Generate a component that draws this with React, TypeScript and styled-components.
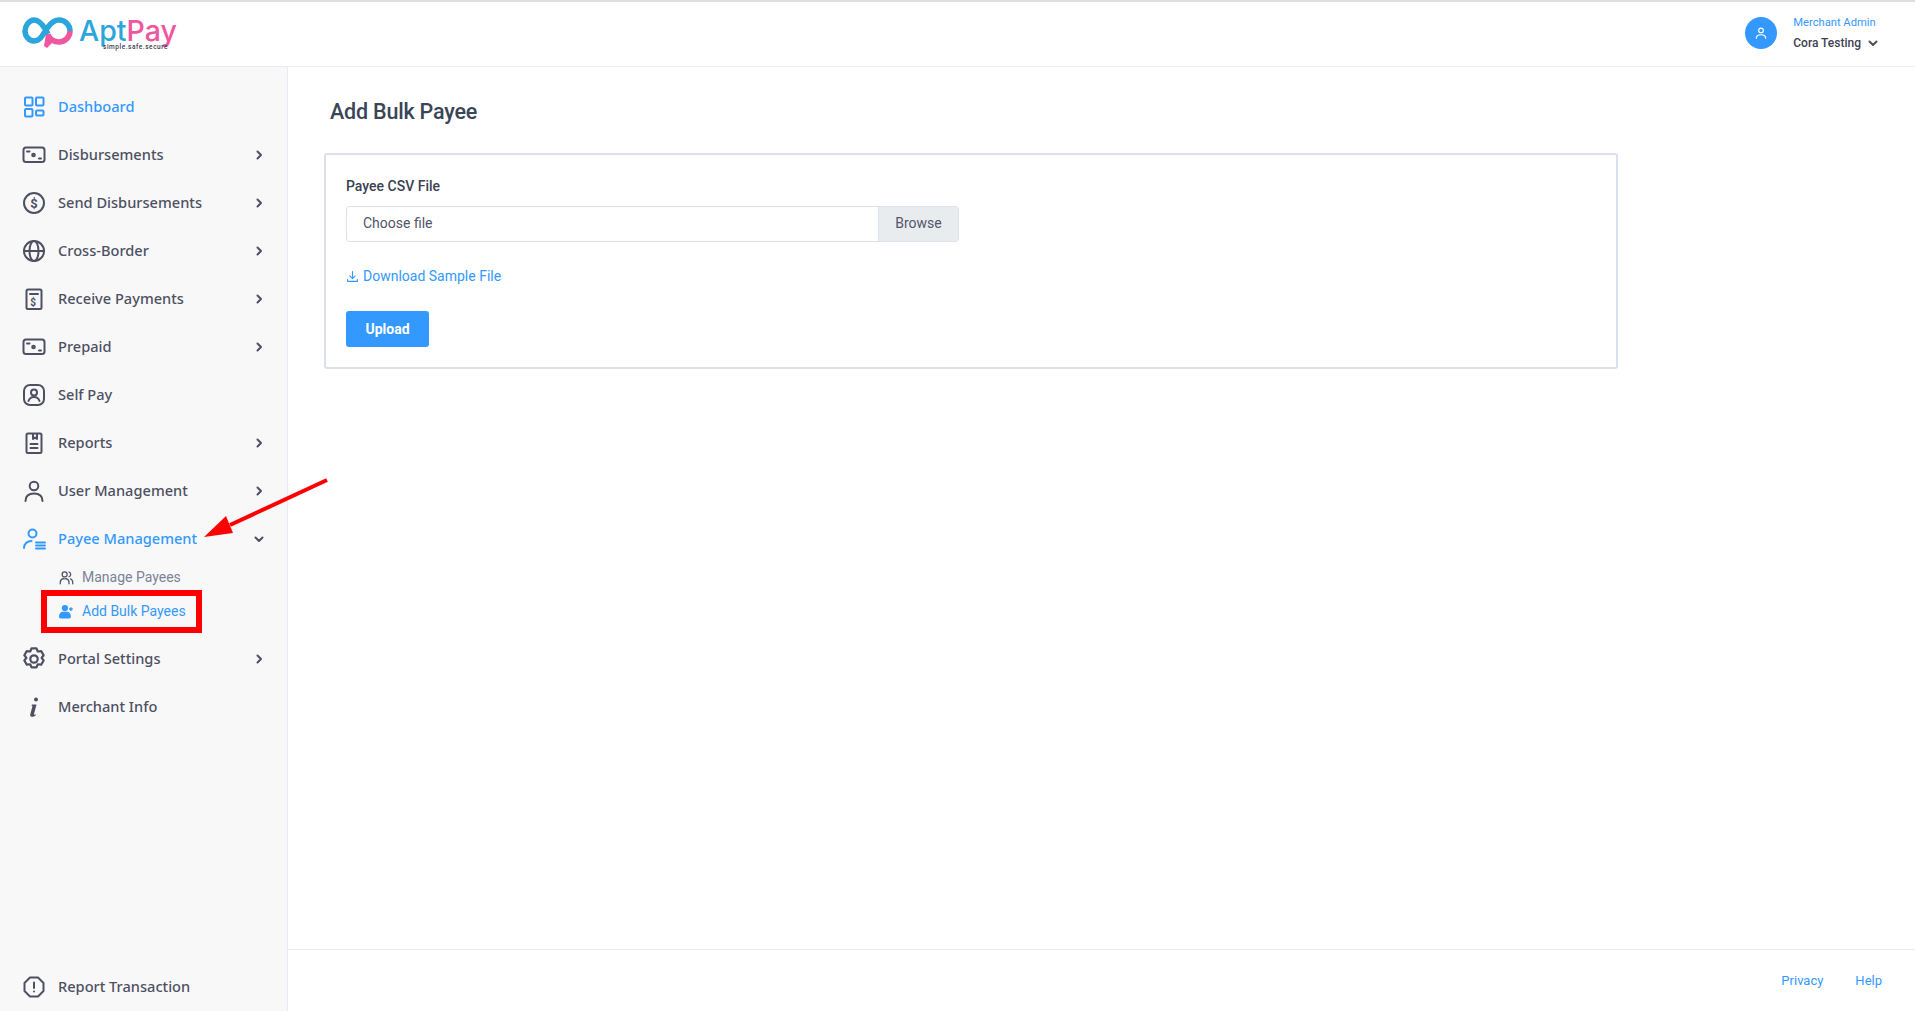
import React from "react";
import styled, { createGlobalStyle } from "styled-components";

const Global = createGlobalStyle`
  html, body { margin: 0; padding: 0; background: #fff; }
  body { font-family: Roboto, "Liberation Sans", sans-serif; color: #343a4e; }
  * { box-sizing: border-box; }
`;

const blue = "#3399ff";
const navInk = "#4e5062";
const navFont = `"Noto Sans", "Open Sans", sans-serif`;

const Page = styled.div`
  position: relative;
  width: 1915px;
  height: 1011px;
  display: grid;
  grid-template-rows: 65px 1fr;
  overflow: hidden;
  border-top: 2px solid #e0e0e0;
`;
const Header = styled.header`
  display: flex;
  align-items: center;
  justify-content: space-between;
  padding: 0 36px 3px 22px;
  border-bottom: 1px solid #e8edf4;
  height: 65px;
`;
const Logo = styled.div`
  display: flex;
  align-items: center;
  gap: 6px;
`;
const Wordmark = styled.div`
  position: relative;
  font-family: Inter, sans-serif;
  font-size: 28.5px;
  font-weight: 500;
  line-height: 28px;
  color: #2ba6dc;
  padding-bottom: 4px;
`;
const WordPink = styled.span`
  color: #f0559f;
`;
const Tagline = styled.span`
  position: absolute;
  left: 24px;
  bottom: -2px;
  font-family: Roboto, sans-serif;
  font-size: 6.5px;
  font-weight: 500;
  line-height: 7px;
  letter-spacing: 0.55px;
  color: #3b3f55;
  white-space: nowrap;
`;
const UserBox = styled.div`
  display: flex;
  align-items: center;
  gap: 16px;
`;
const Avatar = styled.div`
  width: 32px;
  height: 32px;
  border-radius: 50%;
  background: ${blue};
  display: flex;
  align-items: center;
  justify-content: center;
  color: #fff;
`;
const UserText = styled.div`
  display: flex;
  flex-direction: column;
  gap: 6px;
`;
const Role = styled.span`
  font-size: 11.2px;
  line-height: 14px;
  color: ${blue};
`;
const UserName = styled.span`
  display: flex;
  align-items: center;
  gap: 6px;
  font-size: 12px;
  line-height: 14px;
  font-weight: 500;
  color: #3f4254;
`;
const Body = styled.div`
  display: grid;
  grid-template-columns: 288px 1fr;
  min-height: 0;
`;
const Sidebar = styled.nav`
  display: flex;
  flex-direction: column;
  background: #f8f8f9;
  border-right: 1px solid #e9eaf3;
  padding-top: 16px;
`;
const NavRow = styled.div<{ $active?: boolean; $bottom?: boolean }>`
  height: 48px;
  flex: none;
  display: flex;
  align-items: center;
  padding: 0 22px 0 22px;
  gap: 12px;
  font-family: ${navFont};
  font-size: 14.6px;
  font-weight: 500;
  color: ${(p) => (p.$active ? blue : navInk)};
  margin-top: ${(p) => (p.$bottom ? "auto" : "0")};
`;
const NavIcon = styled.span`
  width: 24px;
  height: 24px;
  flex: none;
  display: flex;
  align-items: center;
  justify-content: center;
`;
const NavLabel = styled.span`
  flex: 1;
  padding-bottom: 2px;
`;
const SubMenu = styled.div`
  display: flex;
  flex-direction: column;
  margin-top: -3px;
  padding: 0 0 7px 59px;
`;
const SubRow = styled.div<{ $active?: boolean }>`
  height: 34px;
  display: flex;
  align-items: center;
  gap: 8px;
  font-size: 14px;
  color: ${(p) => (p.$active ? blue : "#7b8398")};
`;
const SubIcon = styled.span`
  width: 15px;
  height: 15px;
  display: flex;
  color: ${navInk};
`;
const SubIconActive = styled(SubIcon)`
  color: ${blue};
`;
const Main = styled.main`
  display: flex;
  flex-direction: column;
  min-width: 0;
`;
const Content = styled.div`
  flex: 1;
  padding: 27px 0 0 36px;
`;
const Title = styled.h1`
  margin: 0 0 23px 6px;
  font-size: 21.5px;
  line-height: 36px;
  font-weight: 500;
  letter-spacing: -0.2px;
  color: #3a4558;
`;
const Card = styled.section`
  width: 1294px;
  height: 216px;
  border: 2px solid #dcdfee;
  border-radius: 3px;
  padding: 21px 20px;
`;
const Label = styled.div`
  font-size: 14px;
  line-height: 20px;
  font-weight: 500;
  color: #3b4152;
  margin-bottom: 10px;
`;
const FileField = styled.div`
  width: 613px;
  height: 36px;
  display: flex;
  border: 1px solid #dfe2ea;
  border-radius: 3px;
  overflow: hidden;
  font-size: 14px;
  color: #50566a;
`;
const FileName = styled.div`
  flex: 1;
  padding-left: 16px;
  line-height: 33px;
`;
const Browse = styled.div`
  width: 80px;
  text-align: center;
  line-height: 33px;
  background: #e9ecef;
  border-left: 1px solid #dfe2ea;
`;
const DownloadLink = styled.a`
  display: flex;
  align-items: center;
  gap: 4px;
  margin-top: 24px;
  height: 20px;
  font-size: 14px;
  color: ${blue};
`;
const UploadButton = styled.button`
  display: block;
  margin-top: 25px;
  width: 83px;
  height: 36px;
  border: 0;
  border-radius: 3px;
  background: ${blue};
  color: #fff;
  font-family: Roboto, sans-serif;
  font-size: 14px;
  font-weight: 700;
`;
const Footer = styled.footer`
  height: 62px;
  flex: none;
  border-top: 1px solid #e9ebee;
  display: flex;
  justify-content: flex-end;
  gap: 32px;
  padding: 22px 33px 0 0;
`;
const FooterLink = styled.a`
  font-size: 13px;
  line-height: 18px;
  color: ${blue};
`;
const Annotation = styled.svg`
  position: absolute;
  left: 0;
  top: -2px;
  pointer-events: none;
`;

type SP = { children: React.ReactNode; s?: number; w?: number };
const Ico = ({ children, s = 24, w = 2 }: SP) => (
  <svg width={s} height={s} viewBox="0 0 24 24" fill="none" stroke="currentColor" strokeWidth={w} strokeLinecap="round" strokeLinejoin="round">
    {children}
  </svg>
);
const Chevron = ({ down }: { down?: boolean }) => (
  <svg width="12" height="12" viewBox="0 0 12 12" fill="none" stroke={navInk} strokeWidth="2" strokeLinecap="round" strokeLinejoin="round" style={{ flex: "none" }}>
    <path d={down ? "M2.500 4.500 6 8l3.500-3.500" : "M4.500 2.500 8 6l-3.500 3.500"} />
  </svg>
);

const Dash = () => (
  <Ico>
    <rect x="3" y="2.500" width="7.500" height="8" rx="1" />
    <rect x="14" y="2.500" width="7.500" height="8" rx="1" />
    <rect x="3" y="14" width="7.500" height="7.500" rx="1" />
    <rect x="14" y="15.500" width="7.500" height="5" rx="1" />
  </Ico>
);
const CashCard = () => (
  <Ico>
    <rect x="1.500" y="4.500" width="21" height="14.500" rx="2.500" />
    <circle cx="11.500" cy="12" r="1.300" />
    <path d="M5 8.500h2.500M17 15.500h2" />
  </Ico>
);
const Dollar = () => (
  <Ico>
    <circle cx="12" cy="12" r="10" />
    <text x="12" y="16.500" textAnchor="middle" fontSize="13" fontWeight="700" fill="currentColor" stroke="none" fontFamily="Roboto, sans-serif">$</text>
  </Ico>
);
const Globe = () => (
  <Ico>
    <circle cx="12" cy="12" r="10" />
    <ellipse cx="12" cy="12" rx="4.500" ry="10" />
    <path d="M2 12h20" />
  </Ico>
);
const Receipt = () => (
  <Ico>
    <rect x="4.500" y="2.500" width="15" height="19.500" rx="1.500" />
    <path d="M8 7h8" />
    <text x="11" y="18.500" textAnchor="middle" fontSize="10" fontWeight="700" fill="currentColor" stroke="none" fontFamily="Roboto, sans-serif">$</text>
  </Ico>
);
const SelfPay = () => (
  <Ico>
    <rect x="2" y="2" width="20" height="20" rx="6" />
    <circle cx="12" cy="9.500" r="3" />
    <path d="M6.500 18c1-3 3-4 5.500-4s4.500 1 5.500 4" />
  </Ico>
);
const Report = () => (
  <Ico>
    <rect x="4.500" y="2.500" width="15" height="19.500" rx="1.500" />
    <path d="M11 3v5l2-1.500L15 8V3M8.500 13h7M8.500 17h7" />
  </Ico>
);
const UserIcon = () => (
  <Ico>
    <circle cx="12" cy="7" r="4.300" />
    <path d="M3.500 22c0-5 3.500-7.500 8.500-7.500s8.500 2.500 8.500 7.500" />
  </Ico>
);
const PayeeIcon = () => (
  <Ico>
    <circle cx="10.500" cy="6.500" r="4" />
    <path d="M2 21c0-4 3-7 7.500-7M14 15.500h9M14 18.500h9M14 21.500h9" />
  </Ico>
);
const Gear = () => (
  <Ico>
    <g transform="translate(12 12) scale(1.12) translate(-12 -12)">
      <circle cx="12" cy="12" r="3.300" />
      <path d="M9.800 2.500h4.400l1.200 2.800 3-.4 2.200 3.800-1.800 2.300 1.800 2.300-2.200 3.800-3-.4-1.200 2.800H9.800l-1.200-2.800-3 .4-2.200-3.800 1.800-2.300-1.800-2.300 2.200-3.800 3 .4z" />
    </g>
  </Ico>
);
const InfoI = () => (
  <svg width="24" height="24" viewBox="0 0 24 24" fill="currentColor">
    <circle cx="14" cy="4.500" r="2" />
    <path d="M10 9.500h4.500L12 19c-.2.8.6 1 1.800.2l.2.800c-1.500 1.500-3 2-4.300 1.800-1.400-.3-1.700-1.200-1.400-2.500L10.500 11l-1 .1z" />
  </svg>
);
const Alert = () => (
  <Ico>
    <path d="M8 2.500h8L21.500 8v8L16 21.500H8L2.500 16V8z" />
    <path d="M12 7.500v5.500M12 16.500v.1" />
  </Ico>
);
const People = () => (
  <Ico s={15}>
    <circle cx="9" cy="7" r="4" />
    <path d="M2 22v-3a6 6 0 0 1 6-5h2a6 6 0 0 1 6 5v3M16 3.200a4 4 0 0 1 0 7.600M22 22v-3a6 6 0 0 0-3.500-4.800" />
  </Ico>
);
const PersonPlus = () => (
  <svg width="15" height="15" viewBox="0 0 24 24" fill="currentColor">
    <circle cx="9.500" cy="6.500" r="5" />
    <path d="M0 20c0-5 3-7.500 6-7.500h7c3 0 6 2.500 6 7.500 0 2-1 3-3 3H3c-2 0-3-1-3-3z" />
    <path d="M19 5v6M16 8h6" stroke="currentColor" strokeWidth="2.200" />
  </svg>
);

const Row = ({ icon, label, more, active, bottom, open }: { icon: React.ReactNode; label: string; more?: boolean; active?: boolean; bottom?: boolean; open?: boolean }) => (
  <NavRow $active={active} $bottom={bottom}>
    <NavIcon>{icon}</NavIcon>
    <NavLabel>{label}</NavLabel>
    {more && <Chevron down={open} />}
  </NavRow>
);

export default function App() {
  return (
    <Page>
      <Global />
      <Header>
        <Logo>
          <svg width="51" height="31" viewBox="0 0 51 31" fill="none">
            <path d="M26 17c1 5 6 8 11 8 6 0 11-5 11-11" stroke="#f0559f" strokeWidth="5.500" />
            <path d="M24 17l6 3 1 5-6 6-3-2z" fill="#f0559f" />
            <path d="M48 14C48 8 43 3 37 3c-5 0-8 3-11 7l-6 9c-2 3-4 5-8 5C7 24 3 19 3 14S7 3 12 3c5 0 9 4 14 14" stroke="#2ba6dc" strokeWidth="5.500" />
          </svg>
          <Wordmark>
            Apt<WordPink>Pay</WordPink>
            <Tagline>simple.safe.secure</Tagline>
          </Wordmark>
        </Logo>
        <UserBox>
          <Avatar>
            <Ico s={14}>
              <circle cx="12" cy="7.500" r="4" />
              <path d="M4 21c0-4 4-6 8-6s8 2 8 6" />
            </Ico>
          </Avatar>
          <UserText>
            <Role>Merchant Admin</Role>
            <UserName>
              Cora Testing <Chevron down />
            </UserName>
          </UserText>
        </UserBox>
      </Header>
      <Body>
        <Sidebar>
          <Row icon={<Dash />} label="Dashboard" active />
          <Row icon={<CashCard />} label="Disbursements" more />
          <Row icon={<Dollar />} label="Send Disbursements" more />
          <Row icon={<Globe />} label="Cross-Border" more />
          <Row icon={<Receipt />} label="Receive Payments" more />
          <Row icon={<CashCard />} label="Prepaid" more />
          <Row icon={<SelfPay />} label="Self Pay" />
          <Row icon={<Report />} label="Reports" more />
          <Row icon={<UserIcon />} label="User Management" more />
          <Row icon={<PayeeIcon />} label="Payee Management" more open active />
          <SubMenu>
            <SubRow>
              <SubIcon><People /></SubIcon>
              Manage Payees
            </SubRow>
            <SubRow $active>
              <SubIconActive><PersonPlus /></SubIconActive>
              Add Bulk Payees
            </SubRow>
          </SubMenu>
          <Row icon={<Gear />} label="Portal Settings" more />
          <Row icon={<InfoI />} label="Merchant Info" />
          <Row icon={<Alert />} label="Report Transaction" bottom />
        </Sidebar>
        <Main>
          <Content>
            <Title>Add Bulk Payee</Title>
            <Card>
              <Label>Payee CSV File</Label>
              <FileField>
                <FileName>Choose file</FileName>
                <Browse>Browse</Browse>
              </FileField>
              <DownloadLink>
                <Ico s={13}>
                  <path d="M12 3v12M7 11l5 5 5-5M3 17v4h18v-4" />
                </Ico>
                Download Sample File
              </DownloadLink>
              <UploadButton>Upload</UploadButton>
            </Card>
          </Content>
          <Footer>
            <FooterLink>Privacy</FooterLink>
            <FooterLink>Help</FooterLink>
          </Footer>
        </Main>
      </Body>
      <Annotation width="1915" height="1011" viewBox="0 0 1915 1011">
        <rect x="44" y="593" width="155" height="37" fill="none" stroke="#ff0000" strokeWidth="6" />
        <path d="M327 480 230 525" stroke="#ff0000" strokeWidth="4" />
        <path d="M204 537 226 516 233 533z" fill="#ff0000" />
      </Annotation>
    </Page>
  );
}
